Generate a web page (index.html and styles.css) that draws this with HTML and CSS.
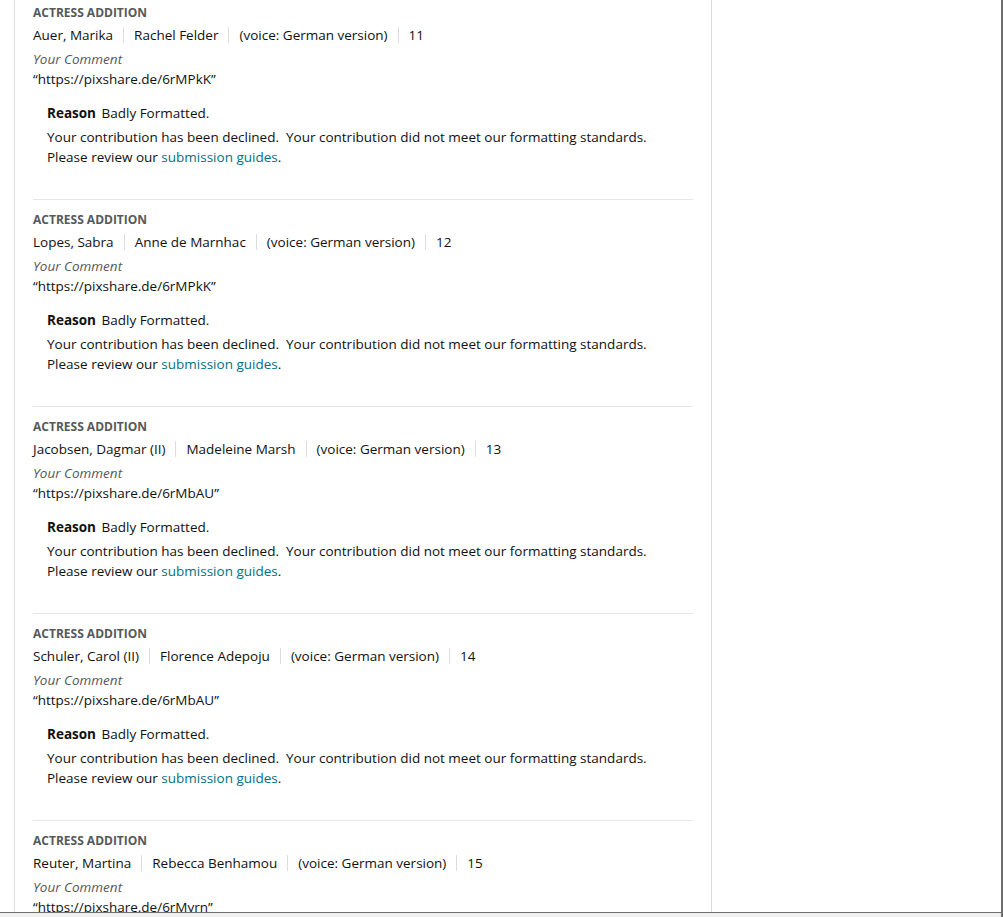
FILE: index.html
```html
<!DOCTYPE html>
<html>
<head>
<meta charset="utf-8">
<link rel="stylesheet" href="styles.css">
</head>
<body>
<div class="window">
  <div class="viewport">
    <div class="panel">
      <div class="item">
        <div class="kind">Actress Addition</div>
        <div class="names"><span>Auer, Marika</span><span class="sep"></span><span>Rachel Felder</span><span class="sep"></span><span>(voice: German version)</span><span class="sep"></span><span>11</span></div>
        <div class="label">Your Comment</div>
        <div class="comment">“https://pixshare.de/6rMPkK”</div>
        <div class="reason">
          <div><b>Reason</b> Badly Formatted.</div>
          <p>Your contribution has been declined.&nbsp; Your contribution did not meet our formatting standards.<br>Please review our <a href="#">submission guides</a>.</p>
        </div>
      </div>
      <div class="item">
        <div class="kind">Actress Addition</div>
        <div class="names"><span>Lopes, Sabra</span><span class="sep"></span><span>Anne de Marnhac</span><span class="sep"></span><span>(voice: German version)</span><span class="sep"></span><span>12</span></div>
        <div class="label">Your Comment</div>
        <div class="comment">“https://pixshare.de/6rMPkK”</div>
        <div class="reason">
          <div><b>Reason</b> Badly Formatted.</div>
          <p>Your contribution has been declined.&nbsp; Your contribution did not meet our formatting standards.<br>Please review our <a href="#">submission guides</a>.</p>
        </div>
      </div>
      <div class="item">
        <div class="kind">Actress Addition</div>
        <div class="names"><span>Jacobsen, Dagmar (II)</span><span class="sep"></span><span>Madeleine Marsh</span><span class="sep"></span><span>(voice: German version)</span><span class="sep"></span><span>13</span></div>
        <div class="label">Your Comment</div>
        <div class="comment">“https://pixshare.de/6rMbAU”</div>
        <div class="reason">
          <div><b>Reason</b> Badly Formatted.</div>
          <p>Your contribution has been declined.&nbsp; Your contribution did not meet our formatting standards.<br>Please review our <a href="#">submission guides</a>.</p>
        </div>
      </div>
      <div class="item">
        <div class="kind">Actress Addition</div>
        <div class="names"><span>Schuler, Carol (II)</span><span class="sep"></span><span>Florence Adepoju</span><span class="sep"></span><span>(voice: German version)</span><span class="sep"></span><span>14</span></div>
        <div class="label">Your Comment</div>
        <div class="comment">“https://pixshare.de/6rMbAU”</div>
        <div class="reason">
          <div><b>Reason</b> Badly Formatted.</div>
          <p>Your contribution has been declined.&nbsp; Your contribution did not meet our formatting standards.<br>Please review our <a href="#">submission guides</a>.</p>
        </div>
      </div>
      <div class="item">
        <div class="kind">Actress Addition</div>
        <div class="names"><span>Reuter, Martina</span><span class="sep"></span><span>Rebecca Benhamou</span><span class="sep"></span><span>(voice: German version)</span><span class="sep"></span><span>15</span></div>
        <div class="label">Your Comment</div>
        <div class="comment">“https://pixshare.de/6rMyrn”</div>
        <div class="reason">
          <div><b>Reason</b> Badly Formatted.</div>
          <p>Your contribution has been declined.&nbsp; Your contribution did not meet our formatting standards.<br>Please review our <a href="#">submission guides</a>.</p>
        </div>
      </div>
    </div>
  </div>
  <div class="hbar"></div>
</div>
</body>
</html>
```
FILE: styles.css
```css
html, body {
  margin: 0;
  padding: 0;
  background: #ffffff;
  overflow: hidden;
}
body {
  font-family: "Open Sans", "Noto Sans", Arial, sans-serif;
  font-size: 13.5px;
  line-height: 20px;
  color: #0f1111;
}
.window {
  width: 1001px;
  height: 917px;
  border-right: 2px solid #6d6d6d;
  display: flex;
  flex-direction: column;
}
.viewport {
  height: 912px;
  overflow: hidden;
  border-bottom: 1px solid #6d6d6d;
}
.hbar {
  flex: 1;
  background: #f0f0f0;
}
.panel {
  margin-left: 14px;
  width: 660px;
  min-height: 912px;
  padding: 0 18px;
  border-left: 1px solid #dddddd;
  border-right: 1px solid #dddddd;
}
.item {
  border-top: 1px solid #e7e7e7;
  padding: 12px 0 32px;
}
.item:first-child {
  border-top: 0;
  padding-top: 5px;
}
.kind {
  font-size: 12px;
  line-height: 16px;
  font-weight: 700;
  text-transform: uppercase;
  color: #565959;
  margin-bottom: 4px;
}
.names {
  display: flex;
  align-items: center;
  margin-bottom: 4px;
}
.sep {
  width: 1px;
  height: 16px;
  background: #dddddd;
  margin: 0 10px;
}
.label {
  font-style: italic;
  color: #565959;
}
.reason {
  margin-top: 14px;
  padding-left: 14px;
}
.reason b {
  font-weight: 700;
  margin-right: 2px;
}
.reason p {
  margin: 4px 0 0;
}
.reason a {
  color: #007185;
  text-decoration: none;
}
```
